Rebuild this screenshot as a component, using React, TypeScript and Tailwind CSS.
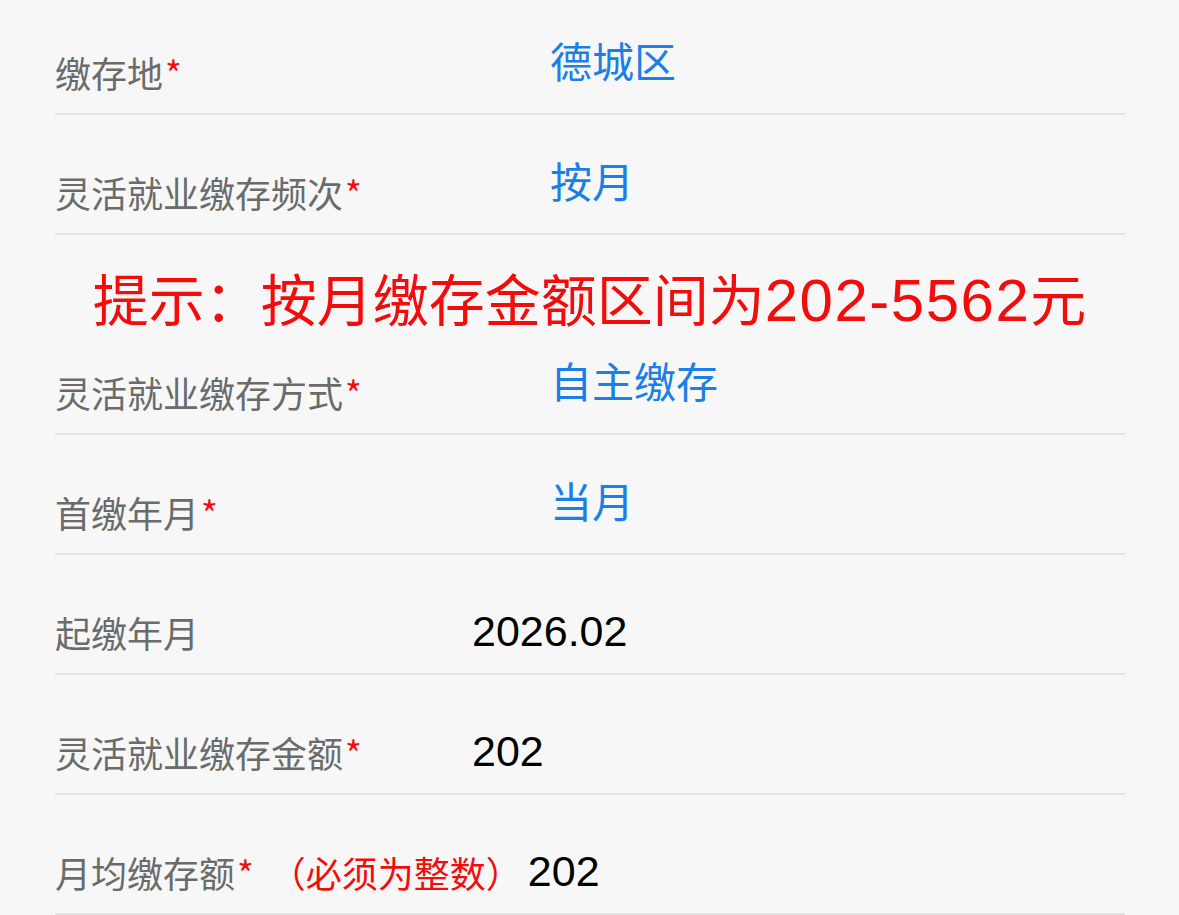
import React from 'react';

const cjk = 'font-["Noto_Sans_CJK_SC",sans-serif]';
const latin = 'font-["Liberation_Sans","Noto_Sans_CJK_SC",sans-serif]';

const Label: React.FC<{ text: string; required?: boolean; fixed?: boolean }> = ({ text, required = true, fixed = true }) => (
  <div className={`${fixed ? 'w-[417px] shrink-0' : ''} mt-[59px] text-[36px] leading-none text-[#6b6b6b]`}>
    {text}
    {required && <span className="ml-[2px] text-[#f20c0c]">*</span>}
  </div>
);

const Row: React.FC<{ children: React.ReactNode }> = ({ children }) => (
  <div className="flex h-[120px] items-start border-b-2 border-[#e2e2e2]">{children}</div>
);

const BlueValue: React.FC<{ text: string }> = ({ text }) => (
  <div className="ml-[78px] mt-[44px] text-[42px] leading-none text-[#1b7fe6]">{text}</div>
);

const BlackValue: React.FC<{ text: string }> = ({ text }) => (
  <div className={`${latin} mt-[55px] text-[43px] leading-none text-black`}>{text}</div>
);

export default function App() {
  return (
    <div className={`${cjk} min-h-screen overflow-hidden bg-[#f7f7f7] pl-[55px] pr-[54px]`}>
      <div className="flex h-[120px] -mt-[5px] items-start border-b-2 border-[#e2e2e2]">
        <Label text="缴存地" />
        <BlueValue text="德城区" />
      </div>

      <Row>
        <Label text="灵活就业缴存频次" />
        <BlueValue text="按月" />
      </Row>

      {/* 金额区间提示 */}
      <div className="h-[80px] pt-[34px] -ml-[55px] -mr-[54px] text-center text-[56px] leading-none text-[#f20c0c]">
        提示：按月缴存金额区间为
        <span className={`${latin} text-[60px] tracking-[1.5px]`}>202-5562</span>
        元
      </div>

      <Row>
        <Label text="灵活就业缴存方式" />
        <BlueValue text="自主缴存" />
      </Row>

      <Row>
        <Label text="首缴年月" />
        <BlueValue text="当月" />
      </Row>

      <Row>
        <Label text="起缴年月" required={false} />
        <BlackValue text="2026.02" />
      </Row>

      <Row>
        <Label text="灵活就业缴存金额" />
        <BlackValue text="202" />
      </Row>

      <Row>
        <Label text="月均缴存额" fixed={false} />
        <div className="ml-[16px] mt-[59px] text-[36px] leading-none text-[#f20c0c]">（必须为整数）</div>
        <div className={`${latin} ml-[6px] mt-[55px] text-[43px] leading-none text-black`}>202</div>
      </Row>
    </div>
  );
}
